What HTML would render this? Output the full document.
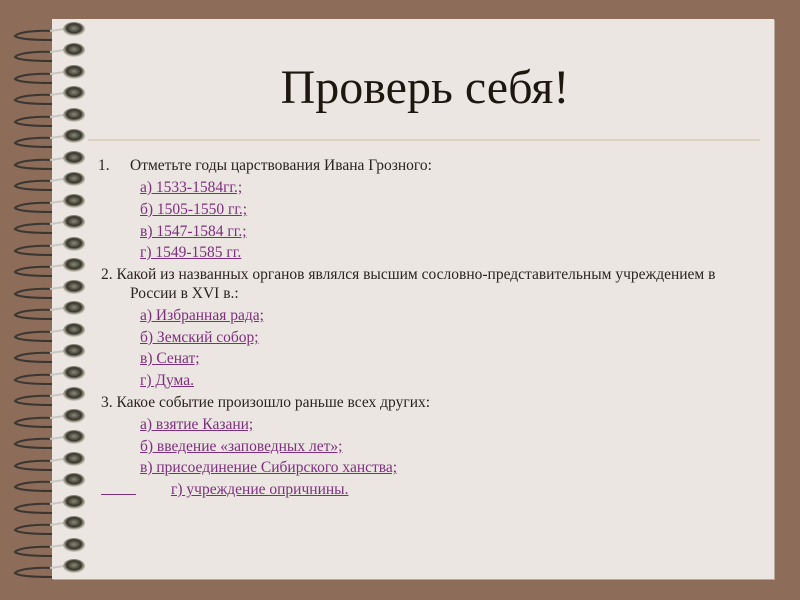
<!DOCTYPE html>
<html><head><meta charset="utf-8"><style>
html,body{margin:0;padding:0}
body{width:800px;height:600px;background:#8d6d5a;position:relative;overflow:hidden;font-family:"Liberation Serif",serif}
.page{position:absolute;left:52px;top:19px;width:722px;height:560px;background:#ebe6e2;box-shadow:1px 1px 0 #b8a89c}
.t{position:absolute;left:0;width:800px;text-align:center;top:60px;font-size:48px;color:#1e1710;line-height:56px;margin-left:25px}
.hr{position:absolute;left:88px;top:139px;width:672px;height:2px;background:#ddd0bc}
.l{position:absolute;font-size:15.5px;color:#2a2420;white-space:nowrap;line-height:17px}
.a{color:#7d2f7d;text-decoration:underline}
</style></head><body>
<div class="page"></div>
<svg width="100" height="600" style="position:absolute;left:0;top:0">
<defs>
<radialGradient id="g" cx="0.5" cy="0.45" r="0.6"><stop offset="0" stop-color="#8a8a78"/><stop offset="0.55" stop-color="#35332a"/><stop offset="1" stop-color="#c8c4a8" stop-opacity="0.2"/></radialGradient>
<g id="r">
<path d="M52 0 C38 -1 18 1 15 5 C18 8 35 9 52 9" fill="none" stroke="#3a3630" stroke-width="2"/>
<path d="M50 0 L64 -2" stroke="#c8c8c0" stroke-width="2"/>
<ellipse cx="74" cy="-2" rx="11" ry="7" fill="url(#g)"/>
</g>
</defs>
<use href="#r" y="31"/><use href="#r" y="52"/><use href="#r" y="74"/><use href="#r" y="95"/><use href="#r" y="117"/><use href="#r" y="138"/><use href="#r" y="160"/><use href="#r" y="181"/><use href="#r" y="203"/><use href="#r" y="224"/><use href="#r" y="246"/><use href="#r" y="267"/><use href="#r" y="289"/><use href="#r" y="310"/><use href="#r" y="332"/><use href="#r" y="353"/><use href="#r" y="375"/><use href="#r" y="396"/><use href="#r" y="418"/><use href="#r" y="439"/><use href="#r" y="461"/><use href="#r" y="482"/><use href="#r" y="504"/><use href="#r" y="525"/><use href="#r" y="547"/><use href="#r" y="568"/>
</svg>
<div class="t">Проверь себя!</div>
<div class="hr"></div>
<div class="l" style="left:98px;top:157px">1.</div>
<div class="l" style="left:130px;top:157px">Отметьте годы царствования Ивана Грозного:</div>
<div class="l a" style="left:140px;top:179px">а) 1533-1584гг.;</div>
<div class="l a" style="left:140px;top:201px">б) 1505-1550 гг.;</div>
<div class="l a" style="left:140px;top:223px">в) 1547-1584 гг.;</div>
<div class="l a" style="left:140px;top:244px">г) 1549-1585 гг.</div>
<div class="l" style="left:101px;top:266px">2. Какой из названных органов являлся высшим сословно-представительным учреждением в</div>
<div class="l" style="left:130px;top:285px">России в XVI в.:</div>
<div class="l a" style="left:140px;top:307px">а) Избранная рада;</div>
<div class="l a" style="left:140px;top:329px">б) Земский собор;</div>
<div class="l a" style="left:140px;top:350px">в) Сенат;</div>
<div class="l a" style="left:140px;top:372px">г) Дума.</div>
<div class="l" style="left:101px;top:394px">3. Какое событие произошло раньше всех других:</div>
<div class="l a" style="left:140px;top:416px">а) взятие Казани;</div>
<div class="l a" style="left:140px;top:438px">б) введение «заповедных лет»;</div>
<div class="l a" style="left:140px;top:459px">в) присоединение Сибирского ханства;</div>
<div style="position:absolute;left:101px;top:494px;width:35px;height:1px;background:#7d2f7d"></div>
<div class="l a" style="left:171px;top:481px">г) учреждение опричнины.</div>
</body></html>
